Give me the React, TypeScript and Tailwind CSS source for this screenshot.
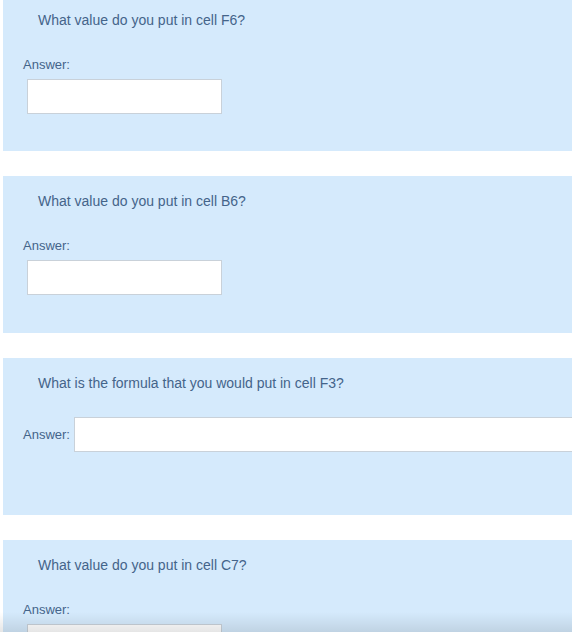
import React from "react";

type Q = { text: string; inline?: boolean; h: string };

const questions: Q[] = [
  { text: "What value do you put in cell F6?", h: "h-[156px]" },
  { text: "What value do you put in cell B6?", h: "h-[157px]" },
  { text: "What is the formula that you would put in cell F3?", inline: true, h: "h-[157px]" },
  { text: "What value do you put in cell C7?", h: "h-[156px]" },
];

function Panel({ q, first }: { q: Q; first?: boolean }) {
  return (
    <div
      className={`ml-[3px] ${q.h} ${first ? "-mt-[5px]" : ""} overflow-hidden bg-[#d5eafc] pl-[20px] pt-[17px] text-[#44648a]`}
    >
      <div className="ml-[15px] text-[14px] leading-[16px]">{q.text}</div>
      {q.inline ? (
        <div className="mt-[26px] flex items-center">
          <span className="text-[13px] leading-[16px]">Answer:</span>
          <div className="ml-[4px] h-[35px] w-[700px] shrink-0 border border-[#c9d1d9] bg-white" />
        </div>
      ) : (
        <>
          <div className="mt-[29px] text-[13px] leading-[16px]">Answer:</div>
          <div className="ml-[4px] mt-[6px] h-[35px] w-[195px] border border-[#c9d1d9] bg-white" />
        </>
      )}
    </div>
  );
}

export default function App() {
  return (
    <div
      className="relative h-[632px] w-[572px] overflow-hidden bg-white"
      style={{ fontFamily: '"Liberation Sans", Arial, sans-serif' }}
    >
      <div className="flex flex-col gap-[25px]">
        {questions.map((q, i) => (
          <Panel key={i} q={q} first={i === 0} />
        ))}
      </div>
      <div className="pointer-events-none absolute bottom-0 left-0 h-[20px] w-full bg-gradient-to-b from-transparent to-black/10" />
    </div>
  );
}
